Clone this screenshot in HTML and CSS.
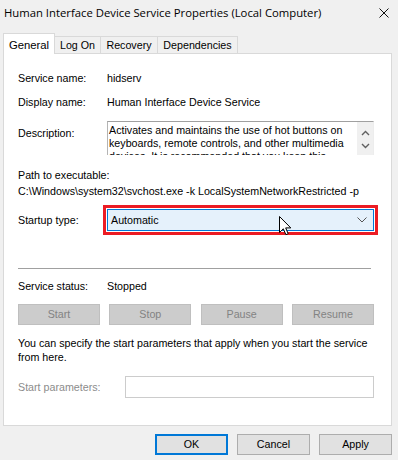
FILE: index.html
```html
<!DOCTYPE html>
<html>
<head>
<meta charset="utf-8">
<link rel="stylesheet" href="styles.css">
</head>
<body>
<div class="window">
  <div class="titlebar">
    <span class="title">Human Interface Device Service Properties (Local Computer)</span>
    <svg class="close" width="10" height="10" viewBox="0 0 10 10"><path d="M0.5 0.5 L9.5 9.5 M9.5 0.5 L0.5 9.5" stroke="#111" stroke-width="1" fill="none"/></svg>
  </div>
  <div class="tabs">
    <div class="tab active t-general">General</div>
    <div class="tab t-logon">Log On</div>
    <div class="tab t-recovery">Recovery</div>
    <div class="tab t-deps">Dependencies</div>
  </div>
  <div class="panel">
    <div class="row r-name"><span class="label">Service name:</span><span>hidserv</span></div>
    <div class="row r-disp"><span class="label">Display name:</span><span>Human Interface Device Service</span></div>
    <div class="row r-desc">
      <span class="label desc-label">Description:</span>
      <div class="descbox">
        <div class="desctext">Activates and maintains the use of hot buttons on keyboards, remote controls, and other multimedia devices. It is recommended that you keep this service running.</div>
        <div class="scroll">
          <svg width="9" height="6" viewBox="0 0 9 6"><path d="M1 5 L4.5 1.5 L8 5" stroke="#606060" stroke-width="1.4" fill="none"/></svg>
          <svg width="9" height="6" viewBox="0 0 9 6"><path d="M1 1 L4.5 4.5 L8 1" stroke="#606060" stroke-width="1.4" fill="none"/></svg>
        </div>
      </div>
    </div>
    <div class="path">
      <div class="pline">Path to executable:</div>
      <div class="pline">C:\Windows\system32\svchost.exe -k LocalSystemNetworkRestricted -p</div>
    </div>
    <div class="row r-startup">
      <span class="label">Startup type:</span>
      <div class="highlight">
        <div class="combo">
          <span>Automatic</span>
          <svg class="chev" width="10" height="6" viewBox="0 0 10 6"><path d="M0.5 0.5 L5 5 L9.5 0.5" stroke="#555" stroke-width="1" fill="none"/></svg>
        </div>
      </div>
      <svg class="cursor" width="13" height="20" viewBox="0 0 13 20"><path d="M0.5 0.5 L0.5 16.5 L4.3 12.8 L6.9 18.7 L9.2 17.7 L6.7 11.9 L11.8 11.9 Z" fill="#fff" stroke="#000" stroke-width="1" stroke-linejoin="miter"/></svg>
    </div>
    <div class="sep"></div>
    <div class="row r-status"><span class="label">Service status:</span><span>Stopped</span></div>
    <div class="svcbtns">
      <div class="sbtn">Start</div>
      <div class="sbtn">Stop</div>
      <div class="sbtn">Pause</div>
      <div class="sbtn">Resume</div>
    </div>
    <p class="hint">You can specify the start parameters that apply when you start the service from here.</p>
    <div class="row r-params"><span class="label dim plabel">Start parameters:</span><div class="inputbox"></div></div>
  </div>
  <div class="footer">
    <div class="fbtn ok">OK</div>
    <div class="fbtn">Cancel</div>
    <div class="fbtn">Apply</div>
  </div>
</div>
</body>
</html>
```
FILE: styles.css
```css
html, body {
  margin: 0;
  padding: 0;
}
body {
  width: 398px;
  height: 460px;
  background: #f0f0f0;
  font-family: "Liberation Sans", Arial, sans-serif;
  font-size: 10.7px;
  color: #000;
  overflow: hidden;
}
.window {
  width: 398px;
  height: 460px;
}
.titlebar {
  height: 33px;
  display: flex;
  align-items: flex-start;
  justify-content: space-between;
  padding-left: 4px;
  padding-right: 9px;
  box-sizing: border-box;
}
.title {
  font-family: "Open Sans", "Noto Sans", sans-serif;
  font-size: 11.3px;
  line-height: 16px;
  margin-top: 5px;
  color: #000;
}
.close {
  margin-top: 8px;
}
.tabs {
  display: flex;
  align-items: flex-end;
  height: 21px;
  padding-left: 3px;
  position: relative;
  z-index: 1;
  margin-bottom: -1px;
}
.tab {
  box-sizing: border-box;
  height: 17px;
  margin-bottom: 1px;
  border: 1px solid #d9d9d9;
  border-bottom: none;
  background: #f0f0f0;
  text-align: center;
  line-height: 17px;
  margin-left: -1px;
}
.tab.active {
  height: 21px;
  margin-bottom: 0;
  background: #fff;
  line-height: 22px;
  margin-left: 0;
  font-size: 11.3px;
}
.t-general { width: 52px; }
.t-logon { width: 47px; }
.t-recovery { width: 58px; }
.t-deps { width: 81px; }
.panel {
  box-sizing: border-box;
  margin-left: 3px;
  width: 389px;
  height: 373px;
  background: #fff;
  border: 1px solid #d9d9d9;
  padding: 12px 17px 0 14px;
}
.row {
  display: flex;
  align-items: flex-start;
}
.label {
  width: 89px;
  flex: none;
}
.r-name, .r-disp {
  height: 24px;
  line-height: 24px;
}
.r-desc {
  margin-top: 7px;
  height: 34px;
}
.desc-label {
  padding-top: 6px;
  line-height: 13px;
}
.descbox {
  flex: 1;
  box-sizing: border-box;
  height: 34px;
  display: flex;
  border-top: 1px solid #a0a0a0;
  border-left: 1px solid #b4b4b4;
  border-right: 1px solid #ededed;
  overflow: hidden;
}
.desctext {
  flex: 1;
  padding: 2px 4px 0 1px;
  line-height: 13px;
  height: 31px;
  overflow: hidden;
}
.scroll {
  width: 16px;
  flex: none;
  background: #f0f0f0;
  display: flex;
  flex-direction: column;
  align-items: center;
  justify-content: space-around;
  padding: 4px 0 2px;
  box-sizing: border-box;
}
.path {
  margin-top: 12px;
}
.pline {
  line-height: 16px;
}
.r-startup {
  margin-top: 6px;
  position: relative;
}
.r-startup .label {
  line-height: 30px;
  width: 85px;
}
.highlight {
  flex: 1;
  box-sizing: border-box;
  height: 30px;
  border: 3px solid #ec1c24;
  padding: 0 1px;
  margin-right: -4px;
}
.combo {
  box-sizing: border-box;
  height: 22px;
  margin-top: 1px;
  border: 1px solid #0078d7;
  background: #e5f1fb;
  display: flex;
  align-items: center;
  justify-content: space-between;
  padding: 0 6px 0 3px;
}
.chev {
  display: block;
}
.cursor {
  position: absolute;
  left: 261px;
  top: 11px;
}
.sep {
  margin-top: 33px;
  height: 1px;
  background: #a0a0a0;
  margin-right: 3px;
}
.r-status {
  margin-top: 10px;
  line-height: 14px;
}
.svcbtns {
  margin-top: 11px;
  display: flex;
  justify-content: space-between;
}
.sbtn {
  box-sizing: border-box;
  width: 82px;
  height: 21px;
  background: #cccccc;
  border: 1px solid #bfbfbf;
  color: #838383;
  text-align: center;
  line-height: 19px;
}
.hint {
  margin: 11px 0 0;
  line-height: 14px;
}
.r-params {
  margin-top: 12px;
  height: 22px;
}
.plabel {
  width: 107px;
  line-height: 22px;
}
.dim {
  color: #8c8c8c;
}
.inputbox {
  flex: 1;
  box-sizing: border-box;
  height: 22px;
  border: 1px solid #cccccc;
}
.footer {
  display: flex;
  justify-content: flex-end;
  gap: 9px;
  margin-top: 8px;
  padding-right: 6px;
}
.fbtn {
  box-sizing: border-box;
  width: 73px;
  height: 21px;
  background: #e1e1e1;
  border: 1px solid #adadad;
  text-align: center;
  line-height: 19px;
}
.fbtn.ok {
  border: 2px solid #0078d7;
  line-height: 17px;
}
```
